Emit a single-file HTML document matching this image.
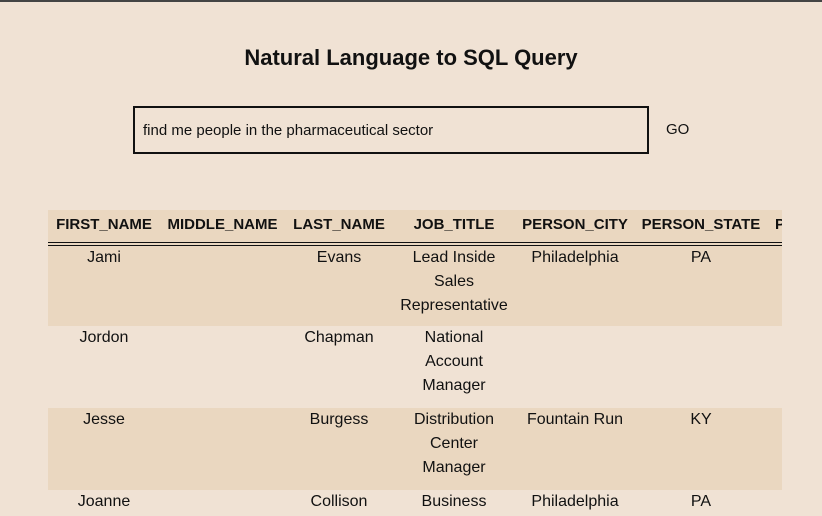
<!DOCTYPE html>
<html><head><style>
html{overflow:hidden}
body{margin:0;background:#f0e2d4;font-family:"Liberation Sans",sans-serif;color:#111;width:822px;height:516px;overflow:hidden;position:relative}
.top{position:absolute;left:0;top:0;width:822px;height:2px;background:#444}
h1{position:absolute;top:44px;left:0;width:822px;text-align:center;margin:0;font-size:22px;font-weight:bold;line-height:28px}
.inp{position:absolute;left:133px;top:106px;width:512px;height:44px;border:2px solid #111;box-sizing:content-box}
.inp span{position:absolute;left:8px;top:14px;font-size:15px}
.go{position:absolute;left:666px;top:121px;font-size:15px}
.wrap{position:absolute;left:48px;top:210px;width:734px;height:306px;overflow:hidden;background:#ead7c0}
table{border-collapse:collapse;table-layout:fixed;width:900px;font-size:16px}
th{height:34px;padding:0 0 4px;font-size:15px;font-weight:bold;text-align:center;border-bottom:4px double #111;white-space:nowrap;box-sizing:border-box}
td{height:82px;padding:0;vertical-align:top;text-align:center;line-height:24px;box-sizing:border-box}
tr.alt td{background:#f0e2d4}
</style></head><body>
<div class="top"></div>
<h1>Natural Language to SQL Query</h1>
<div class="inp"><span>find me people in the pharmaceutical sector</span></div>
<div class="go">GO</div>
<div class="wrap"><table>
<colgroup><col style="width:112px"><col style="width:125px"><col style="width:108px"><col style="width:122px"><col style="width:120px"><col style="width:132px"><col style="width:181px"></colgroup>
<tr><th>FIRST_NAME</th><th>MIDDLE_NAME</th><th>LAST_NAME</th><th>JOB_TITLE</th><th>PERSON_CITY</th><th>PERSON_STATE</th><th style="text-align:left;padding-left:8px">PERSON</th></tr>
<tr><td>Jami</td><td></td><td>Evans</td><td>Lead Inside<br>Sales<br>Representative</td><td>Philadelphia</td><td>PA</td><td></td></tr>
<tr class="alt"><td>Jordon</td><td></td><td>Chapman</td><td>National<br>Account<br>Manager</td><td></td><td></td><td></td></tr>
<tr><td>Jesse</td><td></td><td>Burgess</td><td>Distribution<br>Center<br>Manager</td><td>Fountain Run</td><td>KY</td><td></td></tr>
<tr class="alt"><td>Joanne</td><td></td><td>Collison</td><td>Business</td><td>Philadelphia</td><td>PA</td><td></td></tr>
</table></div>
</body></html>
